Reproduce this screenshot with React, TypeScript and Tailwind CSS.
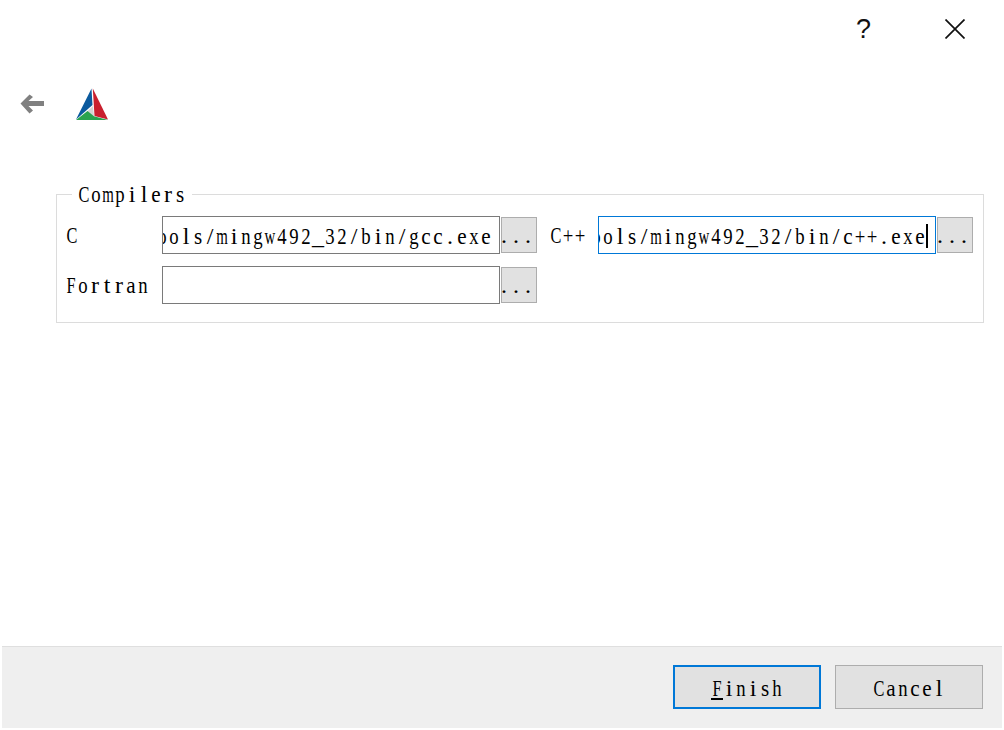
import React from "react";

const font = "font-['Liberation_Serif',serif] text-[24px] leading-[24px] text-black";

function squeeze(ch: string) {
  if ("mw".includes(ch)) return "scale-x-[0.62]";
  if ("CF".includes(ch)) return "scale-x-[0.68]";
  if ("rtilf/_.:".includes(ch)) return "scale-x-100";
  if ("aces".includes(ch)) return "scale-x-[0.88]";
  return "scale-x-[0.78]";
}

function Mono({ text }: { text: string }) {
  return (
    <span className="inline-flex">
      {Array.from(text).map((ch, i) => (
        <span key={i} className={`inline-flex w-[12px] shrink-0 justify-center ${squeeze(ch)}`}>
          {ch}
        </span>
      ))}
    </span>
  );
}

function Field({ value, focused }: { value: string; focused?: boolean }) {
  return (
    <div
      className={`flex h-[38px] w-[338px] shrink-0 items-center justify-end overflow-hidden whitespace-nowrap border bg-white pt-[2px] pr-[7px] ${
        focused ? "border-[#0078d7]" : "border-[#7a7a7a]"
      } ${font}`}
    >
      <Mono text={value} />
      {focused && <span className="h-[24px] w-[2px] shrink-0 bg-black" />}
    </div>
  );
}

function Browse() {
  return (
    <div className={`ml-px flex h-[36px] w-[36px] shrink-0 items-center justify-center overflow-hidden whitespace-nowrap border border-[#adadad] bg-[#e1e1e1] pr-[6px] ${font}`}>
      <Mono text="..." />
    </div>
  );
}

function Row({ children }: { children: React.ReactNode }) {
  return <div className="flex h-[38px] items-center">{children}</div>;
}

export default function App() {
  return (
    <div className="flex h-[730px] w-[1004px] flex-col overflow-hidden bg-white px-[2px] pb-[2px]">
      <div className="flex h-[58px] shrink-0 items-center justify-end">
        <span className="mr-[74px] font-['Liberation_Sans',sans-serif] text-[27px] leading-[30px] text-[#111]">?</span>
        <svg width="20" height="20" viewBox="0 0 20 20" className="mr-[37px]">
          <path d="M0.5 0.5 L19.5 19.5 M19.5 0.5 L0.5 19.5" stroke="#111" strokeWidth="1.7" fill="none" />
        </svg>
      </div>

      <div className="mt-[30px] flex h-[32px] shrink-0 items-center">
        <svg width="24" height="20" viewBox="0 0 24 20" className="ml-[18px]">
          <path d="M0.5 9.5 L9.5 0.5 L13 3 L8.5 7 L24 7 L24 12 L8.5 12 L13 16.5 L9.5 19.5 Z" fill="#808080" />
        </svg>
        <svg width="32" height="32" viewBox="0 0 32 32" className="ml-[32px]">
          <polygon points="15.5,0.5 16.5,17 0,31.5" fill="#0b5a9e" />
          <polygon points="16.8,0.5 32,31.5 18.5,28" fill="#c9202f" />
          <polygon points="17,18 10,24.5 18,28" fill="#d4d4d4" />
          <polygon points="0,32 11.5,23 18,28.3 32,32" fill="#2aa34f" />
        </svg>
      </div>

      <fieldset className="mt-[62px] ml-[54px] w-[928px] shrink-0 border border-[#dcdcdc] pt-[10px] pr-[10px] pb-[18px] pl-[9px]">
        <legend className={`ml-[6px] px-[6px] ${font}`}><Mono text="Compilers" /></legend>
        <div className="flex flex-col gap-[12px]">
          <Row>
            <span className={`flex w-[96px] shrink-0 ${font}`}><Mono text="C" /></span>
            <Field value="C:/Qt/Tools/mingw492_32/bin/gcc.exe" />
            <Browse />
            <span className={`ml-[13px] flex w-[48px] shrink-0 ${font}`}><Mono text="C++" /></span>
            <Field value="C:/Qt/Tools/mingw492_32/bin/c++.exe" focused />
            <Browse />
          </Row>
          <Row>
            <span className={`-ml-px flex w-[97px] shrink-0 ${font}`}><Mono text="Fortran" /></span>
            <Field value="" />
            <Browse />
          </Row>
        </div>
      </fieldset>

      <div className="mt-auto flex h-[82px] shrink-0 items-start justify-end gap-[14px] border-t border-[#dfdfdf] bg-[#efefef] pt-[18px] pr-[19px]">
        <div className={`flex h-[44px] w-[148px] items-center justify-center border-2 border-[#0078d7] bg-[#e1e1e1] pt-[2px] ${font}`}>
          <span className="relative inline-flex">
            <Mono text="Finish" />
            <span className="absolute top-[22px] left-0 h-[2px] w-[12px] bg-black" />
          </span>
        </div>
        <div className={`flex h-[44px] w-[148px] items-center justify-center border border-[#adadad] bg-[#e1e1e1] pt-[2px] ${font}`}>
          <Mono text="Cancel" />
        </div>
      </div>
    </div>
  );
}
